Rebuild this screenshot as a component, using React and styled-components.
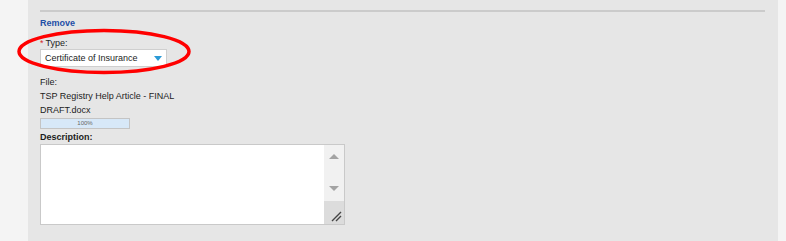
import styled, { createGlobalStyle } from 'styled-components';

const GlobalStyle = createGlobalStyle`
  html, body {
    margin: 0;
    padding: 0;
    background: #f4f4f4;
    font-family: "Liberation Sans", Arial, sans-serif;
  }
`;

const Page = styled.div`
  width: 786px;
  height: 241px;
  display: flex;
  background: #f4f4f4;
  overflow: hidden;
`;

const Panel = styled.div`
  position: relative;
  margin-left: 28px;
  width: 750px;
  height: 241px;
  background: #e6e6e6;
  padding: 10px 13px 0 12px;
  box-sizing: border-box;
`;

const Divider = styled.div`
  height: 2px;
  background: #cbcbcb;
`;

const RemoveLink = styled.a`
  display: block;
  margin-top: 5px;
  color: #1e4ea6;
  font-size: 9px;
  font-weight: bold;
  line-height: 12px;
  text-decoration: none;
  cursor: pointer;
`;

const Label = styled.div`
  margin-top: ${(p) => p.$top || 0}px;
  font-size: 9px;
  line-height: 12px;
  color: #1c1c1c;
  font-weight: ${(p) => (p.$bold ? 'bold' : 'normal')};
`;

const Required = styled.span`
  color: #d51f1f;
  font-size: 9px;
  margin-right: 2px;
`;

const Select = styled.div`
  width: 127px;
  height: 18px;
  box-sizing: border-box;
  background: #fff;
  border: 1px solid #cfcfcf;
  display: flex;
  align-items: center;
  justify-content: space-between;
  padding: 0 3px 0 4px;
  font-size: 9px;
  color: #1c1c1c;
`;

const Caret = styled.span`
  width: 0;
  height: 0;
  border-left: 4px solid transparent;
  border-right: 4px solid transparent;
  border-top: 5px solid #2b9ad6;
  margin-right: 1px;
`;

const FileName = styled.div`
  margin-top: 1px;
  width: 140px;
  font-size: 9px;
  line-height: 14px;
  color: #1c1c1c;
`;

const Progress = styled.div`
  margin-top: 1px;
  width: 90px;
  height: 11px;
  box-sizing: border-box;
  border: 1px solid #c4c4c4;
  background: #d7e8f8;
  font-size: 6px;
  line-height: 9px;
  text-align: center;
  color: #666;
`;

const TextArea = styled.div`
  margin-top: 1px;
  width: 305px;
  height: 81px;
  box-sizing: border-box;
  border: 1px solid #c9c9c9;
  background: #fff;
  display: flex;
  justify-content: flex-end;
`;

const ScrollBar = styled.div`
  width: 20px;
  background: #f1f1f1;
  display: flex;
  flex-direction: column;
`;

const Track = styled.div`
  flex: 1;
  display: flex;
  flex-direction: column;
  justify-content: space-between;
  align-items: center;
  padding: 9px 0 10px;
`;

const Arrow = styled.span`
  width: 0;
  height: 0;
  border-left: 5px solid transparent;
  border-right: 5px solid transparent;
  ${(p) => (p.$up ? 'border-bottom' : 'border-top')}: 5px solid #a3a3a3;
`;

const Corner = styled.div`
  height: 21px;
  background: #dcdcdc;
  display: flex;
  align-items: flex-end;
  justify-content: flex-end;
  padding: 0 2px 2px 0;
`;

const Ellipse = styled.svg`
  position: absolute;
  left: -13px;
  top: 28px;
  pointer-events: none;
`;

export default function App() {
  return (
    <>
      <GlobalStyle />
      <Page>
        <Panel>
          <Divider />
          <RemoveLink>Remove</RemoveLink>
          <Label $top={8}>
            <Required>*</Required>Type:
          </Label>
          <Select>
            <span>Certificate of Insurance</span>
            <Caret />
          </Select>
          <Label $top={9}>File:</Label>
          <FileName>TSP Registry Help Article - FINAL DRAFT.docx</FileName>
          <Progress>100%</Progress>
          <Label $top={2} $bold>Description:</Label>
          <TextArea>
            <ScrollBar>
              <Track>
                <Arrow $up />
                <Arrow />
              </Track>
              <Corner>
                <svg width="11" height="11" viewBox="0 0 11 11">
                  <path d="M1 10 L10 1 M5 10 L10 5" stroke="#444" strokeWidth="1.4" fill="none" />
                </svg>
              </Corner>
            </ScrollBar>
          </TextArea>
          <Ellipse width="180" height="48" viewBox="0 0 180 48">
            <ellipse cx="89" cy="23.5" rx="85" ry="21" fill="none" stroke="#f00" strokeWidth="3.5" />
          </Ellipse>
        </Panel>
      </Page>
    </>
  );
}
